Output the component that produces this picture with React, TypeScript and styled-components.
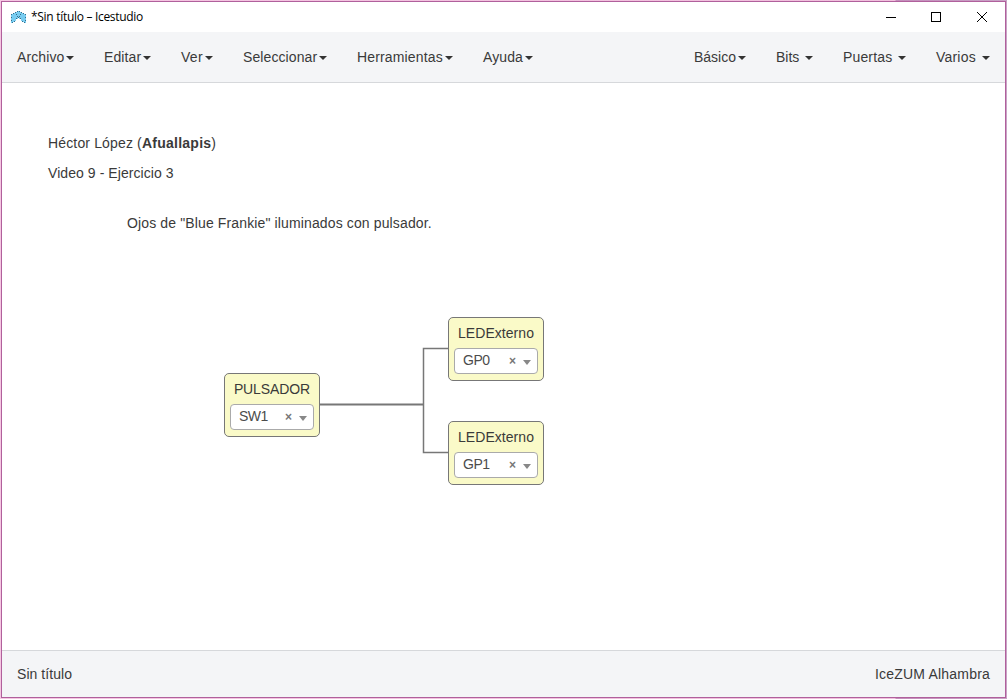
import React from "react";
import styled, { createGlobalStyle } from "styled-components";

const Global = createGlobalStyle`
  html, body { margin: 0; height: 100%; overflow: hidden; }
  *, *::before, *::after { box-sizing: border-box; }
  #root { height: 100%; }
`;

const Desktop = styled.div`
  width: 1007px;
  height: 699px;
  padding: 1px;
  background: linear-gradient(90deg, #f5c6e2 0, #f0bfdc 895px, #c48dbb 896px, #c9a3c6 100%);
  font-family: "Liberation Sans", Arial, sans-serif;
  font-size: 14px;
  line-height: 20px;
  color: #3a3a3a;
`;

const Window = styled.div`
  display: flex;
  flex-direction: column;
  width: 1005px;
  height: 697px;
  border: 1px solid #b0609c;
  background: #fff;
`;

const TitleBar = styled.header`
  display: flex;
  align-items: center;
  height: 30px;
  flex: none;
  padding-left: 9px;
`;

const AppTitle = styled.span`
  flex: 1;
  margin-left: 5px;
  font-family: "Open Sans", "Noto Sans", sans-serif;
  font-size: 12px;
  letter-spacing: -0.3px;
  color: #000;
`;

const WindowButton = styled.span`
  display: flex;
  width: 46px;
  height: 30px;
  align-items: center;
  justify-content: center;
`;

const MenuBar = styled.nav`
  display: flex;
  justify-content: space-between;
  height: 51px;
  flex: none;
  background: #f4f5f7;
  border-bottom: 1px solid #d6d8db;
`;

const MenuGroup = styled.div`
  display: flex;
`;

const MenuItem = styled.div<{ $width: number }>`
  display: flex;
  align-items: center;
  width: ${(p) => p.$width}px;
  padding: 0 15px;
  white-space: nowrap;
  justify-content: space-between;
`;

const Label = styled.span<{ $spacing?: number }>`
  letter-spacing: ${(p) => p.$spacing ?? 0.1}px;
`;

const Caret = styled.span<{ $muted?: boolean }>`
  width: 0;
  height: 0;
  border: 4px solid transparent;
  border-top-color: ${(p) => (p.$muted ? "#888" : "#333")};
  border-bottom: 0;
  margin-top: 2px;
`;

const Canvas = styled.main`
  position: relative;
  flex: 1;
  background: #fff;
`;

const Note = styled.div<{ $x: number; $y: number }>`
  position: absolute;
  left: ${(p) => p.$x}px;
  top: ${(p) => p.$y}px;
  white-space: nowrap;
  p { margin: 0 0 10px; }
  b { letter-spacing: 0.25px; }
`;

const Wires = styled.svg`
  position: absolute;
  left: 0;
  top: 0;
`;

const Block = styled.div<{ $x: number; $y: number }>`
  position: absolute;
  left: ${(p) => p.$x}px;
  top: ${(p) => p.$y}px;
  width: 96px;
  height: 64px;
  padding: 5px;
  border: 1px solid #777;
  border-radius: 5px;
  background: #fafac8;
  text-align: center;
  white-space: nowrap;
`;

const Select = styled.div`
  display: flex;
  align-items: center;
  height: 26px;
  width: 84px;
  margin-top: 5px;
  padding: 0 6px 2px 8px;
  border: 1px solid #aaa;
  border-radius: 4px;
  background: #fff;
  color: #4c4c4c;
`;

const Value = styled.span`
  flex: 1;
  text-align: left;
  letter-spacing: -0.5px;
`;

const Clear = styled.span`
  font-size: 12px;
  font-weight: bold;
  color: #777;
  margin: 1px 7px 0 0;
`;

const SelectCaret = styled(Caret)`
  border-width: 5px 4px 0;
  margin-top: 5px;
`;

const StatusBar = styled.footer`
  display: flex;
  justify-content: space-between;
  align-items: center;
  height: 47px;
  flex: none;
  padding: 0 15px;
  background: #f4f5f7;
  border-top: 1px solid #d6d8db;
`;

type Item = [string, number, number];

const leftMenu: Item[] = [
  ["Archivo", 87, 0.1],
  ["Editar", 77, 0.1],
  ["Ver", 62, 0.3],
  ["Seleccionar", 114, 0.1],
  ["Herramientas", 126, 0.15],
  ["Ayuda", 80, 0.1],
];
const rightMenu: Item[] = [
  ["Básico", 82, 0],
  ["Bits", 67, 0],
  ["Puertas", 93, 0.15],
  ["Varios", 84, 0.2],
];

const blocks = [
  { x: 222, y: 290, name: "PULSADOR", pin: "SW1", spacing: -0.1 },
  { x: 446, y: 234, name: "LEDExterno", pin: "GP0", spacing: 0.05 },
  { x: 446, y: 338, name: "LEDExterno", pin: "GP1", spacing: 0.05 },
];

const Menu = ({ items }: { items: Item[] }) => (
  <MenuGroup>
    {items.map(([text, width, spacing]) => (
      <MenuItem key={text} $width={width}>
        <Label $spacing={spacing}>{text}</Label>
        <Caret />
      </MenuItem>
    ))}
  </MenuGroup>
);

const Logo = () => (
  <svg width="15" height="13" viewBox="0 0 15 13" shapeRendering="crispEdges">
    <path d="M0 3H2V2H4V1H6V0H9V1H11V2H13V3H15V12H13V11H11V10H10V8H8V7H7V8H5V10H4V11H2V12H0Z" fill="#78ccf0" />
    <path
      d="M0 3h1v1h-1zM2 2h1v1h-1zM4 1h1v1h-1zM6 0h1v1h-1zM8 0h1v1h-1zM10 1h1v1h-1zM12 2h1v1h-1zM14 3h1v1h-1zM0 6h1v1h-1zM14 6h1v1h-1zM0 9h1v1h-1zM14 9h1v1h-1zM1 11h1v1h-1zM13 11h1v1h-1zM3 10h1v1h-1zM11 10h1v1h-1zM5 7h1v1h-1zM9 7h1v1h-1zM7 6h1v1h-1zM5 3h1v1h-1zM9 3h1v1h-1zM6 5h1v1h-1zM8 5h1v1h-1z"
      fill="#356f8c"
    />
  </svg>
);

export default function App() {
  return (
    <Desktop>
      <Global />
      <Window>
        <TitleBar>
          <Logo />
          <AppTitle>*Sin título – Icestudio</AppTitle>
          <WindowButton>
            <svg width="12" height="10"><path d="M2 5.5H12" stroke="#000" /></svg>
          </WindowButton>
          <WindowButton>
            <svg width="10" height="10"><rect x=".5" y=".5" width="9" height="9" fill="none" stroke="#000" /></svg>
          </WindowButton>
          <WindowButton>
            <svg width="10" height="10"><path d="M0 0 10 10M10 0 0 10" stroke="#000" /></svg>
          </WindowButton>
        </TitleBar>
        <MenuBar>
          <Menu items={leftMenu} />
          <Menu items={rightMenu} />
        </MenuBar>
        <Canvas>
          <Note $x={46} $y={50}>
            <p><Label $spacing={0.15}>Héctor López (<b>Afuallapis</b>)</Label></p>
            <p><Label $spacing={0.07}>Video 9 - Ejercicio 3</Label></p>
          </Note>
          <Note $x={125} $y={130}>
            <Label $spacing={0.13}>Ojos de "Blue Frankie" iluminados con pulsador.</Label>
          </Note>
          <Wires width="1003" height="567" fill="none" stroke="#777">
            <path d="M318 321.5H422" strokeWidth="2" />
            <path d="M446 265.5H421.5V369.5H446" strokeWidth="1.5" />
          </Wires>
          {blocks.map((b) => (
            <Block key={b.pin} $x={b.x} $y={b.y}>
              <Label $spacing={b.spacing}>{b.name}</Label>
              <Select>
                <Value>{b.pin}</Value>
                <Clear>×</Clear>
                <SelectCaret $muted />
              </Select>
            </Block>
          ))}
        </Canvas>
        <StatusBar>
          <Label $spacing={0.05}>Sin título</Label>
          <Label $spacing={0.2}>IceZUM Alhambra</Label>
        </StatusBar>
      </Window>
    </Desktop>
  );
}
